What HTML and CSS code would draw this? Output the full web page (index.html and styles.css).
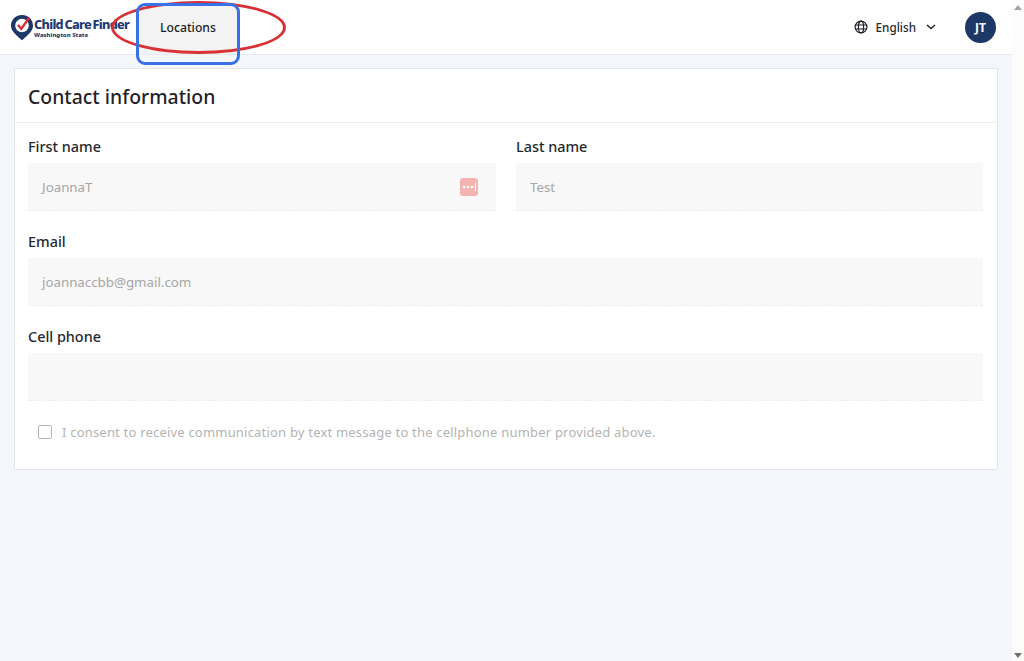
FILE: index.html
```html
<!DOCTYPE html>
<html lang="en">
<head>
<meta charset="utf-8">
<title>Contact information</title>
<link rel="stylesheet" href="styles.css">
</head>
<body>
<div class="app">
  <div class="page">
    <header class="topbar">
      <a class="logo">
        <svg class="pin" width="24" height="27" viewBox="0 0 24 27">
          <path d="M12 1C5.7 1 1 5.7 1 11.6c0 6 5.6 10 11 14.6 5.400-4.600 11-8.600 11-14.600C23 5.700 18.300 1 12 1z" fill="#1d3767"/>
          <circle cx="12" cy="11.500" r="6.800" fill="#fff"/>
          <path d="M8 11l3.200 3.800L19.500 3.500" fill="none" stroke="#d5303a" stroke-width="2.400"/>
        </svg>
        <span class="logo-text">
          <span class="logo-name">Child Care Finder</span>
          <span class="logo-sub">Washington State</span>
        </span>
      </a>
      <nav class="tab">Locations</nav>
      <div class="spacer"></div>
      <div class="lang">
        <svg width="14" height="14" viewBox="0 0 14 14" fill="none" stroke="#1b1f27" stroke-width="1.200">
          <circle cx="7" cy="7" r="5.900"/>
          <ellipse cx="7" cy="7" rx="2.600" ry="5.900"/>
          <path d="M1.300 5h11.400M1.300 9h11.400"/>
        </svg>
        <span>English</span>
        <svg class="chev" width="10" height="6" viewBox="0 0 10 6" fill="none" stroke="#1b1f27" stroke-width="1.400">
          <path d="M1 1l4 3.600L9 1"/>
        </svg>
      </div>
      <div class="avatar">JT</div>
    </header>

    <main class="content">
      <section class="card">
        <h1 class="card-title">Contact information</h1>
        <div class="card-body">
          <div class="row">
            <div class="field">
              <label class="label">First name</label>
              <div class="input">
                <span>JoannaT</span>
                <svg class="pw" width="18" height="18" viewBox="0 0 18 18">
                  <rect width="18" height="18" rx="3" fill="#f4b3b1"/>
                  <circle cx="4" cy="9" r="1.300" fill="#fff"/>
                  <circle cx="8" cy="9" r="1.300" fill="#fff"/>
                  <circle cx="12" cy="9" r="1.300" fill="#fff"/>
                  <rect x="15" y="5" width="1" height="8" fill="#fff"/>
                </svg>
              </div>
            </div>
            <div class="field">
              <label class="label">Last name</label>
              <div class="input"><span>Test</span></div>
            </div>
          </div>
          <div class="stack">
            <label class="label">Email</label>
            <div class="input"><span>joannaccbb@gmail.com</span></div>
          </div>
          <div class="stack">
            <label class="label">Cell phone</label>
            <div class="input"></div>
          </div>
          <div class="consent">
            <span class="box"></span>
            <span>I consent to receive communication by text message to the cellphone number provided above.</span>
          </div>
        </div>
      </section>
    </main>

    <div class="mark-ellipse"></div>
    <div class="mark-rect"></div>
  </div>
  <aside class="scrollbar">
    <span class="arrow-up"></span>
    <span class="arrow-down"></span>
  </aside>
</div>
</body>
</html>
```
FILE: styles.css
```css
* { box-sizing: border-box; }
html, body { margin: 0; height: 100%; overflow: hidden; }
body { font-family: "Noto Sans", "Open Sans", sans-serif; color: #1f2328; background: #f3f6fb; }

.app { display: flex; height: 661px; }
.page { position: relative; flex: 1; min-width: 0; background: #f3f6fb; }

.topbar {
  display: flex; align-items: stretch; height: 55px;
  background: #fff; border-bottom: 1px solid #e6e9ee;
}
.logo { display: flex; align-items: center; gap: 0; margin-left: 10px; width: 128px; }
.pin { flex: none; }
.logo-text { display: flex; flex-direction: column; margin-top: 2px; }
.logo-name { font-size: 12.700px; line-height: 15px; font-weight: 800; letter-spacing: -0.700px; word-spacing: -1px; color: #1d3a74; white-space: nowrap; }
.logo-sub { font-size: 6px; line-height: 7px; font-weight: 800; color: #1d3767; white-space: nowrap; }
.tab {
  display: flex; align-items: center; justify-content: center;
  width: 100px; margin-top: 5px; padding-bottom: 4px; background: #f3f3f3;
  font-size: 12.200px; font-weight: 500; color: #1b1f27;
}
.spacer { flex: 1; }
.lang { display: flex; align-items: center; gap: 8px; font-size: 11.700px; font-weight: 500; color: #262a30; }
.chev { margin-left: 2px; }
.avatar {
  align-self: center; display: flex; align-items: center; justify-content: center;
  width: 31px; height: 31px; margin: 0 16px 0 29px; border-radius: 50%;
  background: #1d3767; color: #fff; font-size: 12px; font-weight: 700;
}

.content { padding: 13px 14px 0 14px; }
.card { background: #fff; border: 1px solid #e2e5ea; }
.card-title {
  margin: 0; height: 54px; padding: 2px 13px 0; display: flex; align-items: center;
  font-size: 19.400px; font-weight: 500; color: #1f2328; border-bottom: 1px solid #eef0f2;
}
.card-body { display: flex; flex-direction: column; gap: 17px; padding: 10px 14px 0 13px; height: 346px; }
.row { display: grid; grid-template-columns: 468px 1fr; gap: 20px; }
.field { min-width: 0; }
.label { display: block; height: 30px; line-height: 27px; font-size: 14.400px; font-weight: 500; color: #24282e; }
.stack .label { line-height: 28px; }
.input {
  display: flex; align-items: center; justify-content: space-between;
  height: 48px; padding: 0 18px 0 14px; background: #f8f8f8;
  border-bottom: 1px dashed #eeeeee;
  font-size: 13.300px; color: #a6a6a6;
}
.consent {
  display: flex; align-items: center; gap: 10px;
  margin-top: 5px; padding-left: 10px;
  font-size: 13px; color: #b3b3b3; letter-spacing: 0.200px;
}
.box { width: 14px; height: 14px; border: 1.500px solid #b5b5b5; border-radius: 2px; flex: none; }

.mark-ellipse {
  position: absolute; left: 111px; top: 1px; width: 175px; height: 53px;
  border: 3px solid #d93036; border-radius: 50%;
}
.mark-rect {
  position: absolute; left: 136px; top: 3px; width: 104px; height: 62px;
  border: 3px solid #3a72e6; border-radius: 9px;
}

.scrollbar { position: relative; width: 12px; flex: none; background: #fcfcfc; }
.arrow-up, .arrow-down { position: absolute; left: 2px; width: 0; height: 0; border-left: 4px solid transparent; border-right: 4px solid transparent; }
.arrow-up { top: 5px; border-bottom: 5px solid #a0a0a0; }
.arrow-down { bottom: 3px; border-top: 5px solid #707070; }
```
